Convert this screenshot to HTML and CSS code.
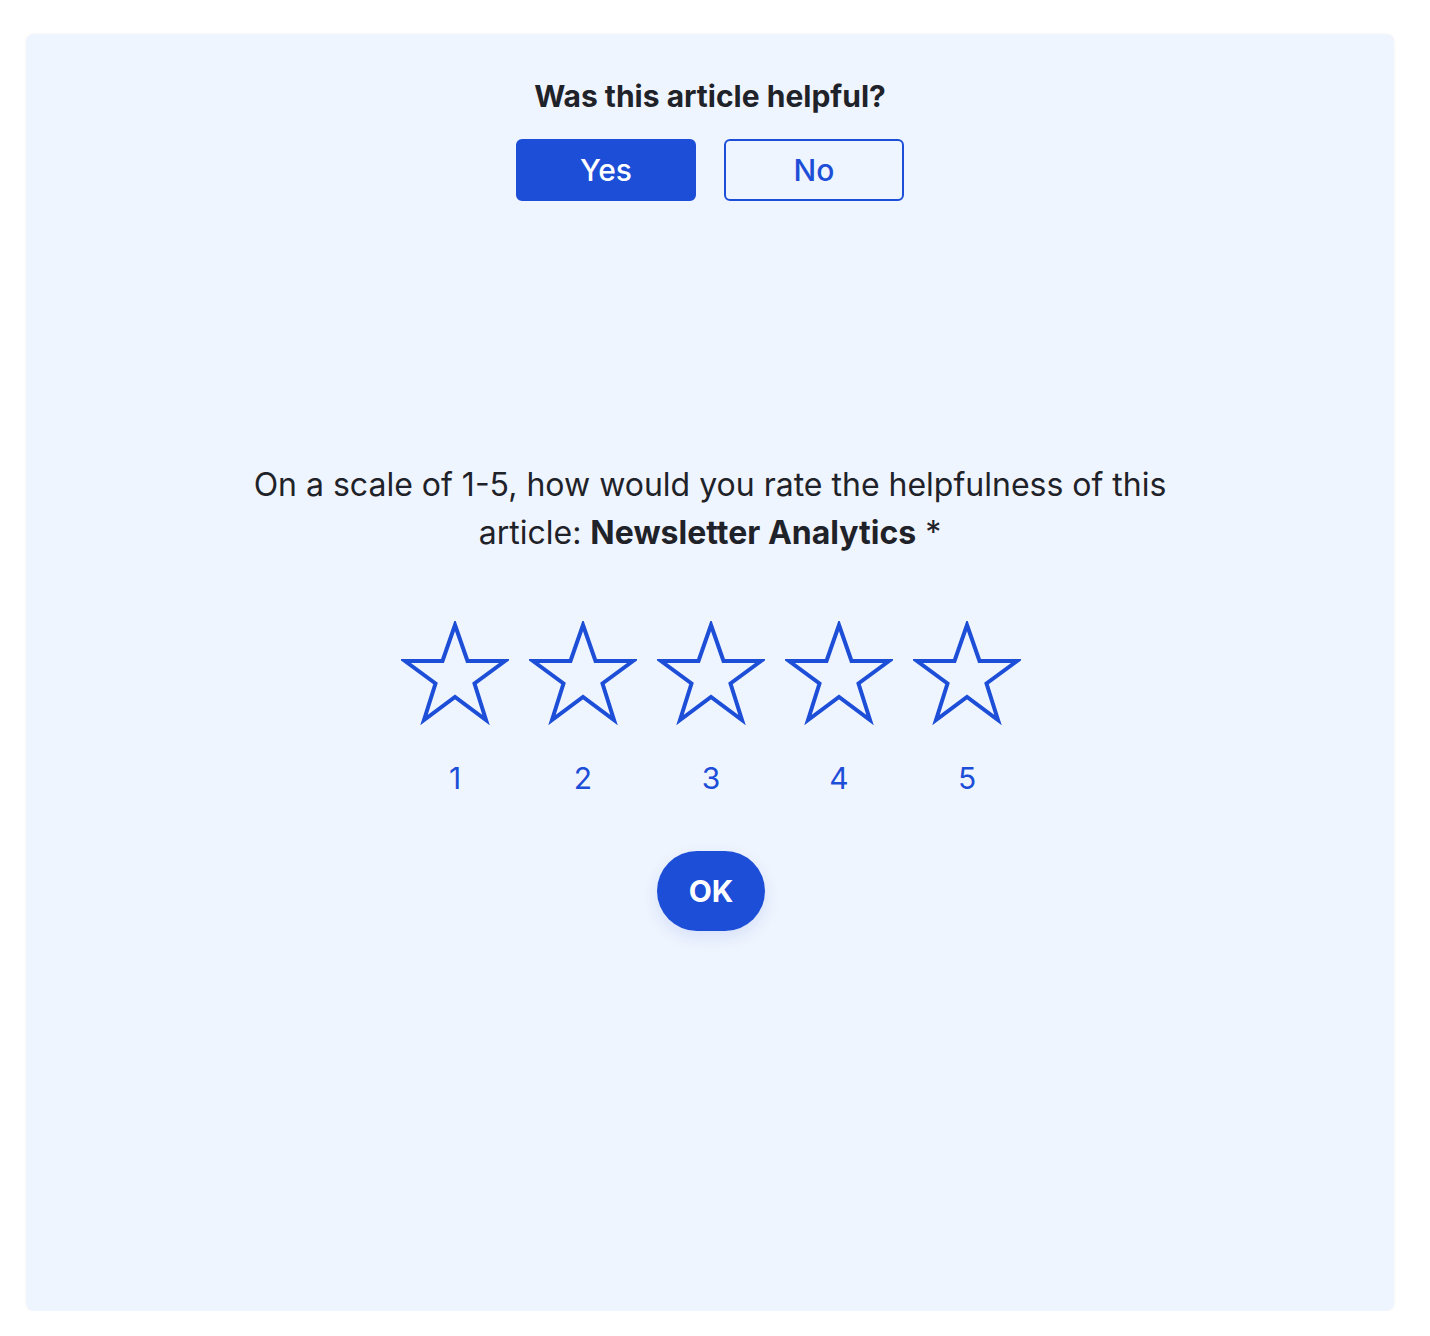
FILE: index.html
```html
<!DOCTYPE html>
<html lang="en">
<head>
<meta charset="utf-8">
<title>Feedback</title>
<link rel="stylesheet" href="styles.css">
</head>
<body>
<div class="card">
  <h2 class="title">Was this article helpful?</h2>
  <div class="choices">
    <button class="btn btn-yes">Yes</button>
    <button class="btn btn-no">No</button>
  </div>
  <p class="question">On a scale of 1-5, how would you rate the helpfulness of this article: <strong>Newsletter Analytics</strong> *</p>
  <div class="rating">
    <div class="rate"><svg class="star" viewBox="0 0 108 104"><polygon points="54,4 66.5,40 104,40 73.5,62.5 85,99 54,76 23,99 34.5,62.5 4,40 41.5,40"/></svg><span class="num">1</span></div>
    <div class="rate"><svg class="star" viewBox="0 0 108 104"><polygon points="54,4 66.5,40 104,40 73.5,62.5 85,99 54,76 23,99 34.5,62.5 4,40 41.5,40"/></svg><span class="num">2</span></div>
    <div class="rate"><svg class="star" viewBox="0 0 108 104"><polygon points="54,4 66.5,40 104,40 73.5,62.5 85,99 54,76 23,99 34.5,62.5 4,40 41.5,40"/></svg><span class="num">3</span></div>
    <div class="rate"><svg class="star" viewBox="0 0 108 104"><polygon points="54,4 66.5,40 104,40 73.5,62.5 85,99 54,76 23,99 34.5,62.5 4,40 41.5,40"/></svg><span class="num">4</span></div>
    <div class="rate"><svg class="star" viewBox="0 0 108 104"><polygon points="54,4 66.5,40 104,40 73.5,62.5 85,99 54,76 23,99 34.5,62.5 4,40 41.5,40"/></svg><span class="num">5</span></div>
  </div>
  <button class="ok">OK</button>
</div>
</body>
</html>
```
FILE: styles.css
```css
* { box-sizing: border-box; }
html, body { margin: 0; padding: 0; background: #ffffff; }
body {
  font-family: Inter, "Noto Sans", "Liberation Sans", sans-serif;
  color: #1f2329;
}
.card {
  margin: 34px 36px 0 26px;
  height: 1277px;
  background: #eff5fe;
  border-radius: 8px;
  box-shadow: 0 0 3px rgba(0, 0, 0, 0.06);
  display: flex;
  flex-direction: column;
  align-items: center;
  padding-top: 44px;
}
.title {
  margin: 0;
  font-size: 30px;
  line-height: 36px;
  font-weight: 700;
  letter-spacing: 0;
}
.choices {
  display: flex;
  gap: 28px;
  margin-top: 25px;
}
.btn {
  width: 180px;
  height: 62px;
  border-radius: 6px;
  font-family: inherit;
  font-size: 30px;
  font-weight: 500;
  border: 2px solid #1d4ed8;
  cursor: pointer;
}
.btn-yes { background: #1d4ed8; color: #ffffff; }
.btn-no { background: transparent; color: #1d4ed8; }
.question {
  margin: 260px 0 0;
  max-width: 960px;
  text-align: center;
  font-size: 32px;
  line-height: 48px;
}
.question strong { font-weight: 700; }
.rating {
  display: flex;
  gap: 20px;
  margin-top: 64px;
  margin-left: 2px;
}
.rate {
  width: 108px;
  display: flex;
  flex-direction: column;
  align-items: center;
}
.star {
  width: 108px;
  height: 104px;
  display: block;
}
.star polygon {
  fill: none;
  stroke: #1d4ed8;
  stroke-width: 4;
  stroke-linejoin: miter;
}
.num {
  margin-top: 35px;
  font-size: 30px;
  line-height: 36px;
  color: #1d4ed8;
}
.ok {
  margin-top: 55px;
  margin-left: 2px;
  width: 108px;
  height: 80px;
  border-radius: 40px;
  border: none;
  background: #1d4ed8;
  color: #ffffff;
  font-family: inherit;
  font-size: 30px;
  font-weight: 700;
  box-shadow: 0 6px 16px rgba(29, 78, 216, 0.12);
  cursor: pointer;
}
```
